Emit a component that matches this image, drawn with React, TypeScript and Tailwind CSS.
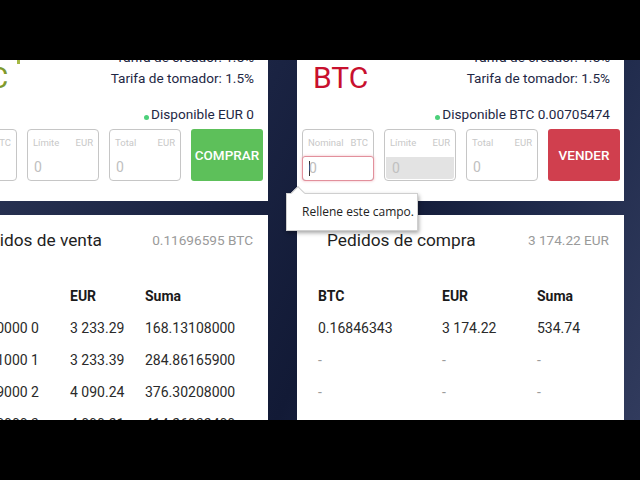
import React from "react";

const font = { fontFamily: "Roboto, 'Noto Sans', sans-serif" };

type FieldProps = {
  label: string;
  unit: string;
  disabled?: boolean;
  focused?: boolean;
};

function Field({ label, unit, disabled, focused }: FieldProps) {
  return (
    <div className="flex h-[52px] w-[72px] shrink-0 flex-col rounded-[4px] border border-[#c6c6c6] bg-white">
      <div className="flex h-[26px] items-center justify-between px-[5px] text-[9.5px] text-[#c8c8c8]">
        <span>{label}</span>
        <span>{unit}</span>
      </div>
      {focused ? (
        <div className="-mx-px -mb-px flex flex-1 items-center rounded-[3px] border border-[#e2909c] pl-[6px] text-[14px] text-[#bdbdbd] shadow-[0_0_3px_#f1b9c1]">
          <span className="mr-[-1px] h-[15px] w-px bg-[#333]" />0
        </div>
      ) : (
        <div
          className={`mb-px flex flex-1 items-center pl-[6px] text-[14px] text-[#c0c0c0] ${
            disabled ? "mx-px mt-px rounded-b-[3px] bg-[#e3e3e3]" : ""
          }`}
        >
          0
        </div>
      )}
    </div>
  );
}

type TradeProps = {
  coin: string;
  coinClass: string;
  available: string;
  fields: FieldProps[];
  button: string;
  buttonClass: string;
  width: string;
  mark?: boolean;
};

function TradeCard({ coin, coinClass, available, fields, button, buttonClass, width, mark }: TradeProps) {
  return (
    <div className={`relative mt-[-30px] flex h-[171px] flex-col bg-white pl-[5px] pr-[5px] ${width}`}>
      {mark && <span className="absolute left-[77px] top-[28px] h-[6px] w-[3px] bg-[#a5b844]" />}
      <div className="flex justify-between pt-[17px] pr-[9px]">
        <div className={`mt-[16px] text-[30px] leading-[30px] ${coinClass}`}>{coin}</div>
        <div className="flex flex-col items-end text-[13.6px] leading-[21px] text-[#1e2744]">
          <span>Tarifa de creador: 1.5%</span>
          <span>Tarifa de tomador: 1.5%</span>
        </div>
      </div>
      <div className="mt-[11px] flex items-center justify-end pr-[9px] text-[13.6px] leading-[20px] text-[#1e2744]">
        <span className="mt-[6px] mr-[2px] h-[5px] w-[5px] rounded-full bg-[#4cd07a]" />
        {available}
      </div>
      <div className="mt-[5px] flex gap-[10px]">
        {fields.map((f) => (
          <Field key={f.label} {...f} />
        ))}
        <div
          className={`flex h-[52px] w-[72px] shrink-0 items-center justify-center rounded-[3px] text-[13.5px] font-medium text-white ${buttonClass}`}
        >
          {button}
        </div>
      </div>
    </div>
  );
}

type OrdersProps = {
  title: string;
  total: string;
  cols: string;
  head: string[];
  rows: string[][];
  width: string;
};

function OrdersCard({ title, total, cols, head, rows, width }: OrdersProps) {
  return (
    <div className={`h-[220px] bg-white ${width}`}>
      <div className="flex items-center justify-between pt-[14px] pl-[30px] pr-[15px]">
        <span className="text-[17.3px] leading-[22px] text-[#1f1f1f]">{title}</span>
        <span className="text-[13.6px] text-[#9a9a9a]">{total}</span>
      </div>
      <div className={`mt-[35px] grid pl-[21px] text-[14px] ${cols}`}>
        {head.map((h, i) => (
          <div key={i} className="h-[32px] font-bold text-[#1a1a1a]">
            {h}
          </div>
        ))}
        {rows.flat().map((c, i) => (
          <div key={i} className={`h-[32px] ${c === "-" ? "text-[#9c9c9c]" : "text-[#2a2a2a]"}`}>
            {c}
          </div>
        ))}
      </div>
    </div>
  );
}

export default function App() {
  return (
    <div className="flex h-[480px] w-[640px] flex-col bg-black" style={font}>
      <div className="h-[60px]" />
      <div className="relative h-[360px] overflow-hidden bg-[linear-gradient(115deg,#2a3454_0%,#1a2342_35%,#121a36_55%,#1f2a4b_75%,#313b5d_100%)]">
        <div className="ml-[-60px] flex gap-[29px]">
          <div className="flex flex-col gap-[14px]">
            <TradeCard
              coin="BTC"
              coinClass="pl-[8px] text-[#7f9a2c]"
              available="Disponible EUR 0"
              width="w-[328px]"
              mark
              fields={[
                { label: "Nominal", unit: "BTC" },
                { label: "Límite", unit: "EUR" },
                { label: "Total", unit: "EUR" },
              ]}
              button="COMPRAR"
              buttonClass="bg-[#5dc05a]"
            />
            <OrdersCard
              title="Pedidos de venta"
              total="0.11696595 BTC"
              width="w-[328px]"
              cols="grid-cols-[109px_75px_1fr]"
              head={["BTC", "EUR", "Suma"]}
              rows={[
                ["0.0520000 0", "3 233.29", "168.13108000"],
                ["0.0881000 1", "3 233.39", "284.86165900"],
                ["0.0919000 2", "4 090.24", "376.30208000"],
                ["0.0990000 3", "4 090.21", "414.26932400"],
              ]}
            />
          </div>
          <div className="flex flex-col gap-[14px]">
            <TradeCard
              coin="BTC"
              coinClass="pl-[11px] text-[#c8102e]"
              available="Disponible BTC 0.00705474"
              width="w-[327px]"
              fields={[
                { label: "Nominal", unit: "BTC", focused: true },
                { label: "Límite", unit: "EUR", disabled: true },
                { label: "Total", unit: "EUR" },
              ]}
              button="VENDER"
              buttonClass="bg-[#d03f4e]"
            />
            <OrdersCard
              title="Pedidos de compra"
              total="3 174.22 EUR"
              width="w-[327px]"
              cols="grid-cols-[124px_95px_1fr]"
              head={["BTC", "EUR", "Suma"]}
              rows={[
                ["0.16846343", "3 174.22", "534.74"],
                ["-", "-", "-"],
                ["-", "-", "-"],
              ]}
            />
          </div>
        </div>

        {/* validation bubble */}
        <div
          className="absolute left-[286px] top-[133px] flex h-[38px] w-[132px] items-center border border-[#cfcfcf] bg-white pl-[15px] text-[12px] text-[#222] shadow-[1px_2px_4px_rgba(0,0,0,0.35)]"
          style={{ fontFamily: "'Open Sans', sans-serif" }}
        >
          <span className="absolute left-[6px] top-[-6px] h-[10px] w-[10px] rotate-45 border-l border-t border-[#cfcfcf] bg-white" />
          Rellene este campo.
        </div>
      </div>
      <div className="h-[60px]" />
    </div>
  );
}
